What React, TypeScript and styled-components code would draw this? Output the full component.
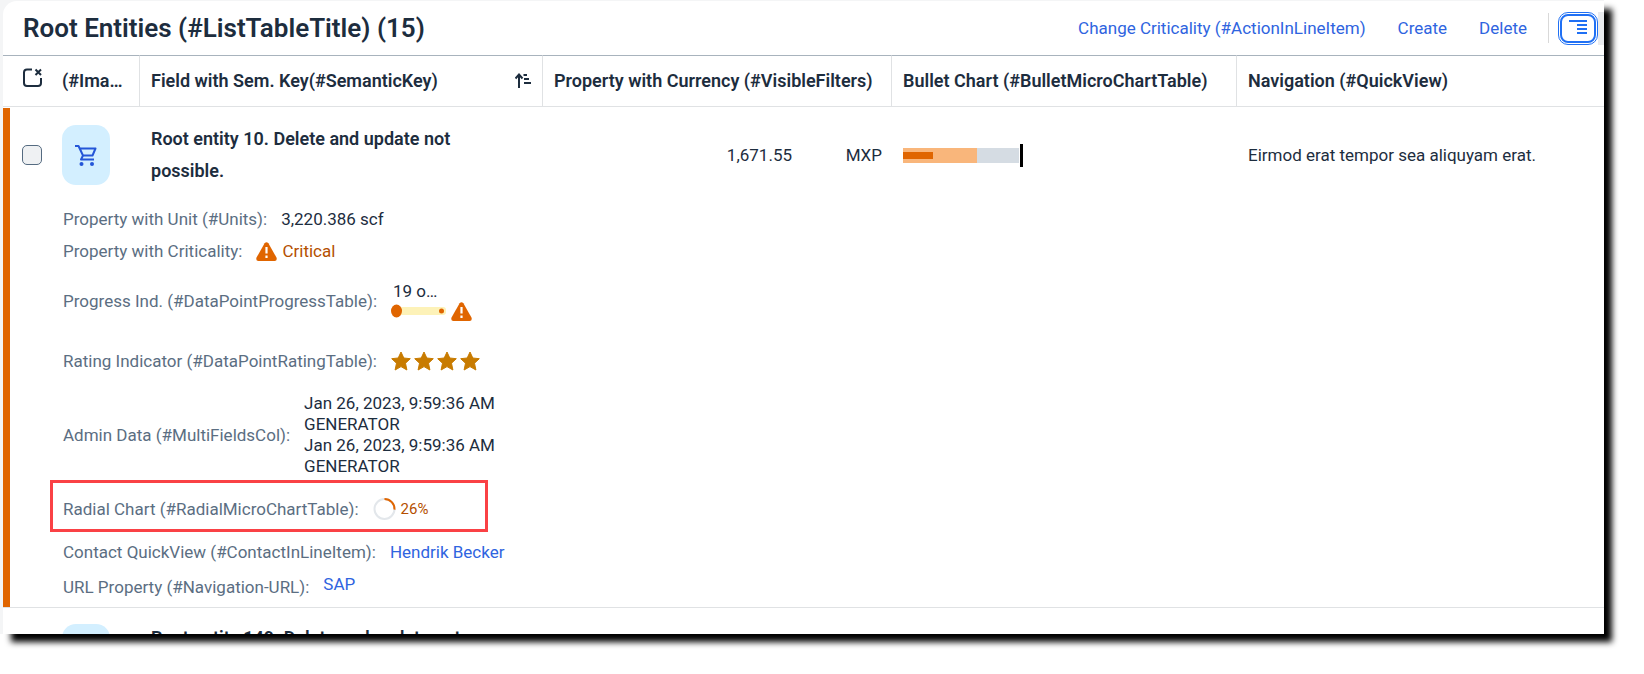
import React from 'react';
import styled, { createGlobalStyle } from 'styled-components';

const GlobalStyle = createGlobalStyle`
  * { box-sizing: border-box; }
  body {
    margin: 0;
    background: #fff;
    color: #1d2d3e;
    font: 400 17px/21px Roboto, "Liberation Sans", sans-serif;
  }
  button, input { font: inherit; }
`;

const Page = styled.main`
  padding: 0 40px 40px 0;
  overflow: hidden;
`;

const Frame = styled.div`
  padding: 1px 0 0 3px;
  background: #f4f5f6;
`;

const Card = styled.section`
  height: calc(100vh - 41px);
  overflow: hidden;
  background: #fff;
  border-top-left-radius: 14px;
  box-shadow: 8px 8px 6px #000;
`;

const Toolbar = styled.header`
  display: flex;
  align-items: center;
  height: 54px;
  padding-left: 20px;
`;

const Title = styled.h1`
  flex: 1;
  margin: 0;
  font-size: 26px;
  line-height: 32px;
  font-weight: 600;
`;

const Action = styled.button`
  padding: 4px 0;
  margin-right: 32px;
  border: 0;
  background: none;
  color: #2f64e0;
  cursor: pointer;
`;

const Separator = styled.span`
  width: 1px;
  height: 30px;
  margin: 0 10px 0 -11px;
  background: #d9d9d9;
`;

const ModeButton = styled.button`
  display: flex;
  justify-content: flex-end;
  align-items: center;
  width: 36px;
  height: 29px;
  margin: 0 2px 0 1px;
  padding: 0 7px 3px;
  border: 2px solid #2070f4;
  border-radius: 8px;
  outline: 1px solid #2070f4;
  outline-offset: 1px;
  background: #fff;
`;

const NextSegment = styled.span`
  width: 6px;
  height: 33px;
  background: #e9ebee;
`;

const Table = styled.table`
  width: 100%;
  table-layout: fixed;
  border-collapse: separate;
  border-spacing: 0;
`;

const Column = styled.col<{ $w?: number }>`
  width: ${(p) => (p.$w ? `${p.$w}px` : 'auto')};
`;

const HeadCell = styled.th<{ $divided?: boolean }>`
  height: 52px;
  padding: 0 10px 2px 11px;
  border-top: 1px solid #a8b3bd;
  border-bottom: 1px solid #e0e2e4;
  border-right: ${(p) => (p.$divided ? '1px solid #e0e2e4' : '0')};
  font-size: 18px;
  font-weight: 600;
  text-align: left;
  white-space: nowrap;
  overflow: hidden;
  text-overflow: ellipsis;
`;

const TightHead = styled(HeadCell)`
  padding-left: 0;
`;

const IconHead = styled(HeadCell)`
  padding: 0 0 8px 20px;
`;

const HeadContent = styled.div`
  display: flex;
  justify-content: space-between;
  align-items: center;
`;

const Highlight = styled.td`
  height: 100%;
  padding: 1px 0 0;
  border-bottom: 1px solid #e0e2e4;
  background: #e06500;
  background-clip: content-box;
`;

const HighlightBar = styled.div`
  height: 100%;
  background: #e06500;
`;

const Cell = styled.td<{ $next?: boolean }>`
  height: ${(p) => (p.$next ? 92 : 96)}px;
  padding: 0 10px 0 11px;
  vertical-align: middle;
`;

const SelectCell = styled(Cell)`
  padding: 0 0 0 12px;
`;

const AvatarCell = styled(Cell)`
  padding: 0;
`;

const Checkbox = styled.input`
  appearance: none;
  display: block;
  width: 20px;
  height: 20px;
  margin: 0;
  border: 1px solid #556b81;
  border-radius: 5px;
  background: #eff1f3;
`;

const Avatar = styled.div`
  display: flex;
  justify-content: center;
  align-items: center;
  width: 48px;
  height: 60px;
  border-radius: 14px;
  background: #d3efff;
`;

const Name = styled.div`
  max-width: 340px;
  font-size: 18px;
  line-height: 32px;
  font-weight: 600;
`;

const Amount = styled.div`
  display: flex;
  justify-content: flex-end;
`;

const Currency = styled.span`
  width: 90px;
  text-align: right;
`;

const GutterCell = styled.td`
  padding: 0;
  border-bottom: 1px solid #e0e2e4;
`;

const PopinCell = styled(GutterCell)`
  padding-bottom: 2px;
`;

const Field = styled.div<{ $h: number }>`
  position: relative;
  display: flex;
  align-items: center;
  gap: 14px;
  height: ${(p) => p.$h}px;
`;

const Label = styled.span`
  padding-left: 1px;
  color: #5b6e82;
`;

const Marker = styled.div`
  position: absolute;
  left: -12px;
  top: -3px;
  width: 438px;
  height: 52px;
  border: 3px solid #fa4145;
`;

const Status = styled.span`
  display: flex;
  align-items: center;
  gap: 5px;
  color: #b44f00;
`;

const Progress = styled.div`
  display: flex;
  align-items: flex-end;
  gap: 5px;
`;

const ProgressMeter = styled.div`
  display: grid;
  gap: 2px;
  padding-bottom: 3px;
`;

const ProgressText = styled.span`
  padding-left: 2px;
`;

const Lines = styled.div`
  white-space: pre-line;
`;

const Percent = styled.span`
  font-size: 15px;
  color: #b44f00;
`;

const Stars = styled.div`
  display: flex;
  gap: 3px;
`;

const Link = styled.a`
  color: #2f64e0;
  text-decoration: none;
`;

const RaisedLink = styled(Link)`
  padding-bottom: 6px;
`;

const Svg = styled.svg`
  display: block;
  flex: none;
`;

const Warning = () => (
  <Svg width="21" height="19" viewBox="0 0 21 19" aria-label="Warning">
    <path d="M8.6 1.2Q10.5-.9 12.4 1.2L20.6 15.8Q21.3 19 18.6 19H2.4Q-.3 19 .4 15.8Z" fill="#e06500" />
    <path d="M9.4 5h2.2v6.5H9.4ZM9.4 13.5h2.2v2.4H9.4Z" fill="#fff" />
  </Svg>
);

const Star = () => (
  <Svg width="20" height="20" viewBox="0 0 20 20">
    <path
      d="M10 1L12.8 7L19.3 7.7L14.5 12.2L15.9 19L10 15.6L4.1 19L5.5 12.2L.7 7.7L7.2 7Z"
      fill="#c87b00"
      stroke="#c87b00"
      strokeWidth="1"
      strokeLinejoin="round"
    />
  </Svg>
);

const Cart = () => (
  <Svg width="22" height="22" viewBox="0 0 22 22" fill="none" stroke="#2456d8" strokeWidth="2">
    <path d="M0 2H3.5L8 11.5H17.5L20.5 4.5H5M8 11.5L6 15.5H19" strokeLinejoin="round" />
    <circle cx="6.5" cy="20" r="2" fill="#2456d8" stroke="none" />
    <circle cx="17" cy="20" r="2" fill="#2456d8" stroke="none" />
  </Svg>
);

const ClearSelection = () => (
  <Svg width="19" height="19" viewBox="0 0 19 19" fill="none" stroke="#1d2d3e" strokeWidth="2">
    <path d="M9 1.5H4Q1 1.5 1 4.5V15Q1 18 4 18H15Q18 18 18 15V10" />
    <path d="M12.5 1.5L18 7M18 1.5L12.5 7" />
  </Svg>
);

const SortAscending = () => (
  <Svg width="17" height="15" viewBox="0 0 17 15" fill="none" stroke="#1d2d3e" strokeWidth="2">
    <path d="M4 15V2M.5 5.5L4 1.5L7.5 5.5M8.5 2H12M9 6H14M9 10H16" />
  </Svg>
);

const details: [string, number, React.ReactNode][] = [
  ['Property with Unit (#Units):', 32, <span>3,220.386 scf</span>],
  ['Property with Criticality:', 32, <Status><Warning />Critical</Status>],
  [
    'Progress Ind. (#DataPointProgressTable):',
    68,
    <Progress>
      <ProgressMeter>
        <ProgressText>19 o…</ProgressText>
        <Svg width="55" height="14" viewBox="0 0 55 14">
          <rect x="6" y="3" width="49" height="8" rx="3" fill="#fdf2b8" />
          <ellipse cx="5.5" cy="7" rx="5.5" ry="6.5" fill="#e06500" />
          <circle cx="50.5" cy="7" r="2.5" fill="#e06500" />
        </Svg>
      </ProgressMeter>
      <Warning />
    </Progress>,
  ],
  ['Rating Indicator (#DataPointRatingTable):', 52, <Stars><Star /><Star /><Star /><Star /></Stars>],
  [
    'Admin Data (#MultiFieldsCol):',
    96,
    <Lines>{'Jan 26, 2023, 9:59:36 AM\nGENERATOR\nJan 26, 2023, 9:59:36 AM\nGENERATOR'}</Lines>,
  ],
  [
    'Radial Chart (#RadialMicroChartTable):',
    52,
    <Status>
      <Svg width="23" height="24" viewBox="0 0 23 24" fill="none" strokeWidth="2">
        <circle cx="11.5" cy="12" r="10" stroke="#e3e7eb" />
        <path d="M11.5 2A10 10 0 0 1 21.5 12.6" stroke="#e06500" />
      </Svg>
      <Percent>26%</Percent>
    </Status>,
  ],
  ['Contact QuickView (#ContactInLineItem):', 34, <Link href="#contact">Hendrik Becker</Link>],
  ['URL Property (#Navigation-URL):', 36, <RaisedLink href="#sap">SAP</RaisedLink>],
];

export default function App() {
  return (
    <Page>
      <GlobalStyle />
      <Frame>
        <Card>
          <Toolbar>
            <Title>Root Entities (#ListTableTitle) (15)</Title>
            <Action>Change Criticality (#ActionInLineItem)</Action>
            <Action>Create</Action>
            <Action>Delete</Action>
            <Separator />
            <ModeButton aria-label="Show details">
              <Svg width="18" height="14" viewBox="0 0 18 14" fill="none" stroke="#2070f4" strokeWidth="2">
                <path d="M0 1H18M8 5H18M8 9H18M8 13H18" />
              </Svg>
            </ModeButton>
            <NextSegment />
          </Toolbar>
          <Table>
            <colgroup>
              <Column $w={7} />
              <Column $w={52} />
              <Column $w={78} />
              <Column $w={403} />
              <Column $w={349} />
              <Column $w={345} />
              <Column />
            </colgroup>
            <thead>
              <tr>
                <IconHead colSpan={2}><ClearSelection /></IconHead>
                <TightHead $divided>(#Image)</TightHead>
                <HeadCell $divided>
                  <HeadContent>Field with Sem. Key(#SemanticKey)<SortAscending /></HeadContent>
                </HeadCell>
                <HeadCell $divided>Property with Currency (#VisibleFilters)</HeadCell>
                <HeadCell $divided>Bullet Chart (#BulletMicroChartTable)</HeadCell>
                <HeadCell>Navigation (#QuickView)</HeadCell>
              </tr>
            </thead>
            <tbody>
              <tr>
                <Highlight rowSpan={2}><HighlightBar /></Highlight>
                <SelectCell><Checkbox type="checkbox" aria-label="Select root entity 10" /></SelectCell>
                <AvatarCell><Avatar><Cart /></Avatar></AvatarCell>
                <Cell><Name>Root entity 10. Delete and update not possible.</Name></Cell>
                <Cell><Amount>1,671.55<Currency>MXP</Currency></Amount></Cell>
                <Cell>
                  <Svg width="121" height="23" viewBox="0 0 121 23">
                    <rect y="4" width="116" height="15" fill="#d5dce3" />
                    <rect y="4" width="74" height="15" fill="#f9b67b" />
                    <rect y="8" width="30" height="7" fill="#e06500" />
                    <rect x="117" width="3" height="23" fill="#000" />
                  </Svg>
                </Cell>
                <Cell>Eirmod erat tempor sea aliquyam erat.</Cell>
              </tr>
              <tr>
                <GutterCell />
                <PopinCell colSpan={5}>
                  {details.map(([label, height, value]) => (
                    <Field key={label} $h={height}>
                      {label.startsWith('Radial') && <Marker />}
                      <Label>{label}</Label>
                      {value}
                    </Field>
                  ))}
                </PopinCell>
              </tr>
              <tr>
                <Cell $next colSpan={2} />
                <AvatarCell $next><Avatar><Cart /></Avatar></AvatarCell>
                <Cell $next><Name>Root entity 149. Delete and update not possible.</Name></Cell>
              </tr>
            </tbody>
          </Table>
        </Card>
      </Frame>
    </Page>
  );
}
